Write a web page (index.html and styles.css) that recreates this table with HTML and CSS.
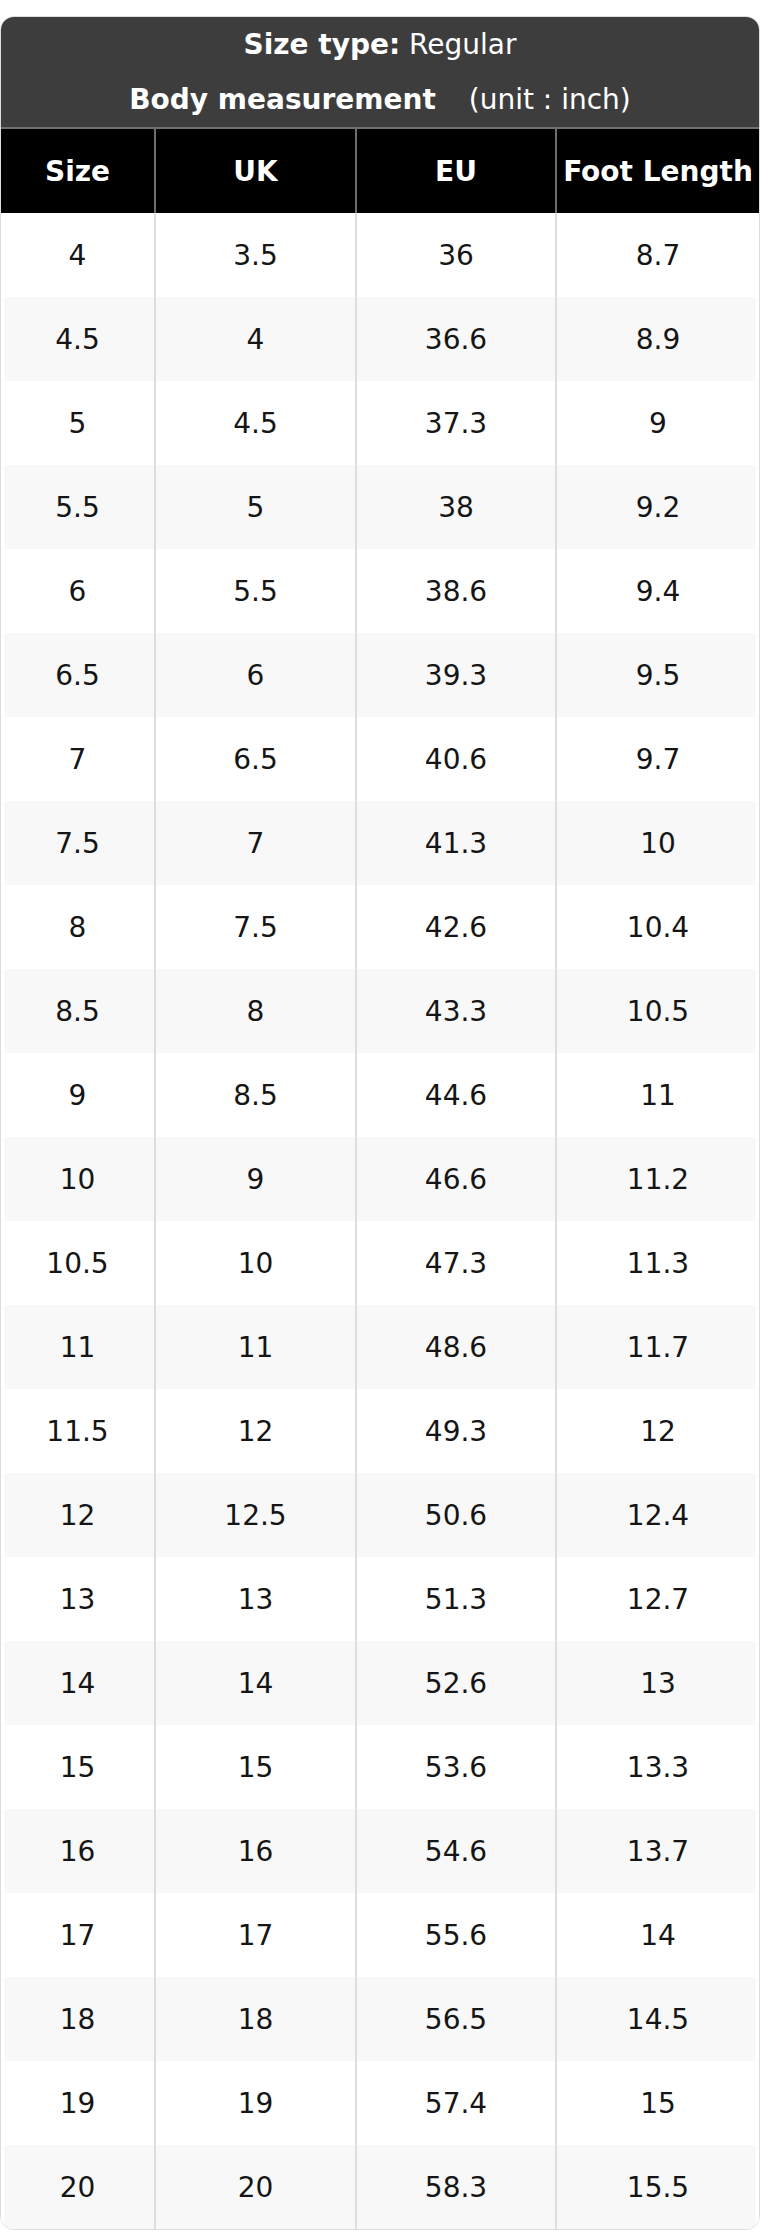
FILE: index.html
```html
<!DOCTYPE html>
<html lang="en">
<head>
<meta charset="utf-8">
<title>Size chart</title>
<link rel="stylesheet" href="styles.css">
</head>
<body>
<div class="chart">
  <div class="title">
    <div class="title-row"><b>Size type:</b> Regular</div>
    <div class="title-row"><b>Body measurement</b><span class="unit">(unit : inch)</span></div>
  </div>
  <table class="sizes">
    <colgroup>
      <col class="c1"><col class="c2"><col class="c3"><col class="c4">
    </colgroup>
    <thead>
      <tr><th>Size</th><th>UK</th><th>EU</th><th>Foot Length</th></tr>
    </thead>
    <tbody>
      <tr><td>4</td><td>3.5</td><td>36</td><td>8.7</td></tr>
      <tr><td>4.5</td><td>4</td><td>36.6</td><td>8.9</td></tr>
      <tr><td>5</td><td>4.5</td><td>37.3</td><td>9</td></tr>
      <tr><td>5.5</td><td>5</td><td>38</td><td>9.2</td></tr>
      <tr><td>6</td><td>5.5</td><td>38.6</td><td>9.4</td></tr>
      <tr><td>6.5</td><td>6</td><td>39.3</td><td>9.5</td></tr>
      <tr><td>7</td><td>6.5</td><td>40.6</td><td>9.7</td></tr>
      <tr><td>7.5</td><td>7</td><td>41.3</td><td>10</td></tr>
      <tr><td>8</td><td>7.5</td><td>42.6</td><td>10.4</td></tr>
      <tr><td>8.5</td><td>8</td><td>43.3</td><td>10.5</td></tr>
      <tr><td>9</td><td>8.5</td><td>44.6</td><td>11</td></tr>
      <tr><td>10</td><td>9</td><td>46.6</td><td>11.2</td></tr>
      <tr><td>10.5</td><td>10</td><td>47.3</td><td>11.3</td></tr>
      <tr><td>11</td><td>11</td><td>48.6</td><td>11.7</td></tr>
      <tr><td>11.5</td><td>12</td><td>49.3</td><td>12</td></tr>
      <tr><td>12</td><td>12.5</td><td>50.6</td><td>12.4</td></tr>
      <tr><td>13</td><td>13</td><td>51.3</td><td>12.7</td></tr>
      <tr><td>14</td><td>14</td><td>52.6</td><td>13</td></tr>
      <tr><td>15</td><td>15</td><td>53.6</td><td>13.3</td></tr>
      <tr><td>16</td><td>16</td><td>54.6</td><td>13.7</td></tr>
      <tr><td>17</td><td>17</td><td>55.6</td><td>14</td></tr>
      <tr><td>18</td><td>18</td><td>56.5</td><td>14.5</td></tr>
      <tr><td>19</td><td>19</td><td>57.4</td><td>15</td></tr>
      <tr><td>20</td><td>20</td><td>58.3</td><td>15.5</td></tr>
    </tbody>
  </table>
</div>
</body>
</html>
```

FILE: styles.css
```css
html, body {
  margin: 0;
  padding: 0;
  background: #ffffff;
}

body {
  padding-top: 16px;
  padding-bottom: 2px;
  font-family: "DejaVu Sans", "Liberation Sans", sans-serif;
}

.chart {
  width: 760px;
  box-sizing: border-box;
  border: 1px solid #dcdcdc;
  border-radius: 14px;
  overflow: hidden;
  background: #ffffff;
}

.title {
  background: #3d3d3d;
  color: #ffffff;
  border-bottom: 2px solid #707070;
}

.title-row {
  height: 55px;
  display: flex;
  align-items: center;
  justify-content: center;
  font-size: 28px;
  white-space: pre;
}

.title-row b {
  font-weight: bold;
}

.unit {
  margin-left: 33px;
}

.sizes {
  width: 758px;
  border-collapse: collapse;
  table-layout: fixed;
}

.c1 { width: 154px; }
.c2 { width: 201px; }
.c3 { width: 200px; }
.c4 { width: 203px; }

.sizes th {
  height: 84px;
  padding: 0;
  background: #000000;
  color: #ffffff;
  font-size: 28px;
  font-weight: bold;
  text-align: center;
  vertical-align: middle;
  border-right: 2px solid #6e6e6e;
  white-space: nowrap;
}

.sizes th:last-child {
  border-right: none;
}

.sizes td {
  height: 84px;
  padding: 0;
  color: #151515;
  font-size: 28px;
  text-align: center;
  vertical-align: middle;
  border-right: 2px solid #dddddd;
}

.sizes td:last-child {
  border-right: none;
}

.sizes tbody tr:nth-child(even) td {
  background: #f8f8f8;
}

.sizes tbody tr td:first-child {
  box-shadow: inset 3px 0 0 #ffffff;
}

.sizes tbody tr td:last-child {
  box-shadow: inset -3px 0 0 #ffffff;
}
```
